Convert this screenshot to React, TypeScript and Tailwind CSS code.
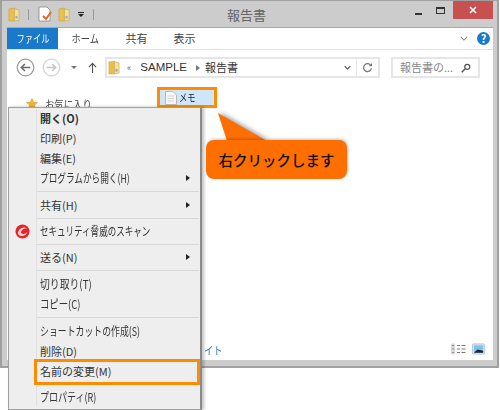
import React from "react";

const font = { fontFamily: '"Noto Sans CJK JP", "Liberation Sans", sans-serif' };

function Folder({ className = "" }: { className?: string }) {
  return (
    <svg viewBox="0 0 13 16" className={className}>
      <path d="M1 2 L7 1 L7 15 L1 15 Z" fill="#e9c050" stroke="#c9a040" strokeWidth="0.6" />
      <path d="M7 2 L12 3 L12 14 L7 15 Z" fill="#f5e09a" stroke="#c9a040" strokeWidth="0.6" />
      <rect x="8" y="9.5" width="2.5" height="3" fill="#8fb8d8" />
    </svg>
  );
}

function Item({ label, bold, arrow, icon, squeeze = "text-[11px]" }: { label: string; bold?: boolean; arrow?: boolean; icon?: boolean; squeeze?: string }) {
  return (
    <div className="flex h-5 items-center relative">
      <div className="w-[27px] shrink-0 flex justify-center">
        {icon && (
          <svg viewBox="0 0 16 16" className="w-[15px] h-[15px]">
            <circle cx="8" cy="8" r="7.5" fill="#e3262c" />
            <path d="M3 10 C4 4.5 9 2.5 13 4.5 C9.5 4.5 7 6 6.2 9 C8 11.5 11 11 13 8.5 C12 13.5 5 14.5 3 10 Z" fill="#fbd0c8" />
          </svg>
        )}
      </div>
      <div className={`ml-[4px] inline-block origin-left leading-5 text-[#333] whitespace-nowrap ${bold ? "font-bold" : ""} ${squeeze}`}>{label}</div>
      {arrow && <div className="absolute left-[177px] top-[7px] w-0 h-0 border-y-[3px] border-y-transparent border-l-[4px] border-l-[#222]" />}
    </div>
  );
}

function Sep({ h = "h-[6px]" }: { h?: string }) {
  return (
    <div className={`${h} flex items-center pl-[28px] pr-[1px]`}>
      <div className="h-[1px] w-full bg-[#d8d8d8]" />
    </div>
  );
}

export default function App() {
  return (
    <div className="relative w-[500px] h-[410px] bg-white overflow-hidden" style={font}>
      {/* window */}
      <div className="w-[499px] h-[368px] bg-[#cccccc] border-2 border-b-[2px] border-[#a0a0a0] border-t-[1px] flex flex-col">
        {/* title bar */}
        <div className="h-[26px] shrink-0 flex items-start relative">
          <div className="flex items-center h-[26px] pl-[6px]">
            <Folder className="w-[12px] h-[15px]" />
            <div className="w-px h-[11px] bg-[#999] ml-[8px]" />
            <svg viewBox="0 0 14 16" className="w-[14px] h-[16px] ml-[9px]">
              <path d="M1 1 H9 L12 4 V15 H1 Z" fill="#fff" stroke="#888" strokeWidth="0.8" />
              <path d="M5 10 L8 13 L13 6" fill="none" stroke="#e0662b" strokeWidth="2" />
            </svg>
            <Folder className="w-[12px] h-[15px] ml-[6px]" />
            <div className="ml-[8px] flex flex-col items-center">
              <div className="w-[6px] h-px bg-[#222] mb-[1px]" />
              <div className="w-0 h-0 border-x-[3px] border-x-transparent border-t-[3px] border-t-[#222]" />
            </div>
            <div className="w-px h-[11px] bg-[#999] ml-[9px]" />
          </div>
          <div className="absolute left-[225px] top-[4px] text-[13px] leading-5 text-[#666]">報告書</div>
          <div className="ml-auto flex items-start pr-[4px]">
            <div className="w-[7px] h-[2px] bg-[#333] mt-[12px] mr-[14px]" />
            <div className="w-[9px] h-[7px] border border-[#333] border-t-2 mt-[6px] mr-[8px]" />
            <div className="w-[40px] h-[18px] bg-[#c75050] flex items-center justify-center text-white">
              <svg viewBox="0 0 8 8" className="w-[8px] h-[8px]"><path d="M1 1 L7 7 M7 1 L1 7" stroke="#fff" strokeWidth="1.6" /></svg>
            </div>
          </div>
        </div>
        {/* body */}
        <div className="flex-1 ml-[5px] mr-[4px] mb-[6px] bg-white border-t border-[#a8a8a8] flex flex-col">
          {/* ribbon */}
          <div className="h-[22px] shrink-0 flex items-center border-b border-[#e0e0e0] relative">
            <div className="w-[51px] h-[21px] bg-[#1979ca] text-white text-[11px] leading-[21px] flex justify-center"><span className="inline-block scale-x-[0.75]">ファイル</span></div>
            <div className="w-[54px] flex justify-center text-[11px] text-[#444]"><span className="inline-block scale-x-[0.84]">ホーム</span></div>
            <div className="w-[49px] flex justify-center text-[11px] text-[#444]">共有</div>
            <div className="w-[47px] flex justify-center text-[11px] text-[#444]">表示</div>
            <div className="ml-auto flex items-center pr-[3px]">
              <svg viewBox="0 0 10 6" className="w-[8px] h-[5px] mr-[9px]"><path d="M1 1 L5 5 L9 1" fill="none" stroke="#888" strokeWidth="1.3" /></svg>
              <div className="w-[13px] h-[13px] rounded-full bg-[#1979ca] text-white text-[11px] font-bold leading-[13px] text-center">?</div>
            </div>
          </div>
          {/* address row */}
          <div className="h-[35px] shrink-0 flex items-center">
            <svg viewBox="0 0 16 16" className="w-[19px] h-[19px] ml-[9px]">
              <circle cx="8" cy="8" r="7" fill="#fff" stroke="#9a9a9a" strokeWidth="1" />
              <path d="M12 8 H4.5 M7.5 5 L4.5 8 L7.5 11" fill="none" stroke="#6b6b6b" strokeWidth="1.3" />
            </svg>
            <svg viewBox="0 0 16 16" className="w-[19px] h-[19px] ml-[7px]">
              <circle cx="8" cy="8" r="7" fill="#fff" stroke="#d2d2d2" strokeWidth="1" />
              <path d="M4 8 H11.5 M8.5 5 L11.5 8 L8.5 11" fill="none" stroke="#c4c4c4" strokeWidth="1.3" />
            </svg>
            <div className="w-0 h-0 border-x-[3px] border-x-transparent border-t-[3px] border-t-[#777] ml-[10px]" />
            <svg viewBox="0 0 10 12" className="w-[9px] h-[11px] ml-[11px]"><path d="M5 12 V1.5 M1 5.5 L5 1.5 L9 5.5" fill="none" stroke="#555" strokeWidth="1.3" /></svg>
            <div className="ml-[8px] w-[275px] h-[21px] border-2 border-[#e6e6e6] flex items-center relative">
              <Folder className="w-[12px] h-[15px] ml-[1px]" />
              <span className="text-[9px] text-[#666] ml-[7px] leading-none">«</span>
              <span className="text-[11.5px] text-[#333] ml-[9px] leading-none" style={{ fontFamily: '"Liberation Sans", sans-serif' }}>SAMPLE</span>
              <div className="w-0 h-0 border-y-[3px] border-y-transparent border-l-[4px] border-l-[#777] ml-[9px]" />
              <span className="text-[11px] text-[#333] ml-[5px]">報告書</span>
              <svg viewBox="0 0 10 6" className="w-[7px] h-[5px] absolute right-[27px] top-[6px]"><path d="M1 1 L5 5 L9 1" fill="none" stroke="#555" strokeWidth="1.6" /></svg>
              <div className="absolute right-[21px] top-0 h-[17px] w-px bg-[#e6e6e6]" />
              <svg viewBox="0 0 12 12" className="w-[11px] h-[11px] absolute right-[5px] top-[3px]"><path d="M9.8 4 A4.3 4.3 0 1 0 10.3 7" fill="none" stroke="#777" strokeWidth="1.4" /><path d="M7.5 4.5 H11 V1 Z" fill="#777" /></svg>
            </div>
            <div className="ml-[11px] w-[89px] h-[21px] border-2 border-[#e6e6e6] flex items-center justify-between pl-[7px] pr-[7px]">
              <span className="text-[11px] text-[#888] whitespace-nowrap">報告書の...</span>
              <svg viewBox="0 0 12 12" className="w-[10px] h-[10px]"><circle cx="7.5" cy="4.5" r="3" fill="none" stroke="#555" strokeWidth="1.5" /><path d="M5 7 L1 11" stroke="#555" strokeWidth="1.8" /></svg>
            </div>
          </div>
          {/* content */}
          <div className="flex-1 flex min-h-0">
            <div className="w-[140px] shrink-0 pt-[8px] pl-[19px] flex items-center h-[30px]">
              <svg viewBox="0 0 14 14" className="w-[12px] h-[12px]"><path d="M7 0.5 L9 5 L13.5 5.3 L10 8.3 L11.2 13 L7 10.5 L2.8 13 L4 8.3 L0.5 5.3 L5 5 Z" fill="#f2b430" stroke="#d08a20" strokeWidth="0.5" /></svg>
              <span className="inline-block origin-left scale-x-[0.85] text-[11px] text-[#444] ml-[7px] whitespace-nowrap">お気に入り</span>
            </div>
          </div>
          {/* status */}
          <div className="h-[22px] shrink-0 flex items-center justify-end pr-[8px]">
            <svg viewBox="0 0 15 12" className="w-[15px] h-[12px]"><rect x="0" y="0.5" width="4" height="11" rx="1" fill="#d8d8d8" /><path d="M1 2.5 H3 M1 6 H3 M1 9.5 H3" stroke="#b08080" strokeWidth="1" /><path d="M6 2.5 H9 M10.5 2.5 H14.5 M6 6 H9 M10.5 6 H14.5 M6 9.5 H9 M10.5 9.5 H14.5" stroke="#777" strokeWidth="1" /></svg>
            <svg viewBox="0 0 14 12" className="w-[13px] h-[12px] ml-[6px]"><rect x="0.5" y="0.5" width="13" height="11" rx="1" fill="#dbe6f0" stroke="#b8c4d0" /><rect x="2" y="2" width="10" height="8" fill="#7cc4ee" /><path d="M2 10 L6 6.5 L12 8 V10 Z" fill="#223" /></svg>
          </div>
        </div>
      </div>

      {/* link text peeking from behind the menu */}
      <div className="absolute left-[204px] top-[342px] inline-block origin-left scale-x-[0.85] text-[11px] leading-4 text-[#2f74b5]">イト</div>

      {/* selected file */}
      <div className="absolute left-[157px] top-[87px] w-[60px] h-[21px] border-[3px] border-[#ff8c00] bg-[#cde6fb] flex items-center pl-[5px]">
        <svg viewBox="0 0 12 14" className="w-[12px] h-[14px] shrink-0"><path d="M0.5 0.5 H8 L11.5 4 V13.5 H0.5 Z" fill="#f8f8f8" stroke="#b8b8b8" /><path d="M2.5 5 H9 M2.5 7.5 H9 M2.5 10 H9" stroke="#d4d4d4" /></svg>
        <span className="inline-block origin-left scale-x-[0.75] text-[11px] text-[#222] ml-[2px] whitespace-nowrap">メモ</span>
      </div>

      {/* context menu */}
      <div className="absolute left-[8px] top-[107px] w-[194px] h-[303px] bg-[#eeeeee] border border-[#a0a0a0] border-r-2 border-r-[#8a8a8a] shadow-[2px_0_3px_rgba(0,0,0,0.25)]">
        <div className="absolute left-[27px] top-[1px] bottom-[3px] w-px bg-[#e0e0e0]" />
        <Item label="開く(O)" bold />
        <Item label="印刷(P)" />
        <Item label="編集(E)" />
        <Item label="プログラムから開く(H)" arrow squeeze="text-[12px] scale-x-[0.72]" />
        <Sep h="h-[7px]" />
        <Item label="共有(H)" arrow />
        <Sep />
        <Item label="セキュリティ脅威のスキャン" icon squeeze="text-[12px] scale-x-[0.71]" />
        <Sep />
        <Item label="送る(N)" arrow />
        <Sep h="h-[7px]" />
        <Item label="切り取り(T)" squeeze="text-[12px] scale-x-[0.82]" />
        <Item label="コピー(C)" squeeze="text-[12px] scale-x-[0.78]" />
        <Sep h="h-[7px]" />
        <Item label="ショートカットの作成(S)" squeeze="text-[12px] scale-x-[0.74]" />
        <Item label="削除(D)" />
        <Item label="名前の変更(M)" />
        <Sep />
        <Item label="プロパティ(R)" squeeze="text-[12px] scale-x-[0.75]" />
      </div>
      <div className="absolute left-[34px] top-[359px] w-[166px] h-[26px] border-[3px] border-[#ff8c00]" />

      {/* callout */}
      <svg viewBox="0 0 70 40" className="absolute left-[217px] top-[110px] w-[70px] h-[40px] drop-shadow-[2px_-1px_2px_rgba(0,0,0,0.35)]">
        <path d="M1 3 L50 31 L10 31 Z" fill="#ff6f00" />
      </svg>
      <div className="absolute left-[206px] top-[140px] w-[141px] h-[39px] rounded-[8px] bg-[#ff6f00] shadow-[1px_-1px_3px_rgba(0,0,0,0.25)] flex items-center justify-center text-[14.5px] font-medium text-[#111]">
        右クリックします
      </div>
    </div>
  );
}
